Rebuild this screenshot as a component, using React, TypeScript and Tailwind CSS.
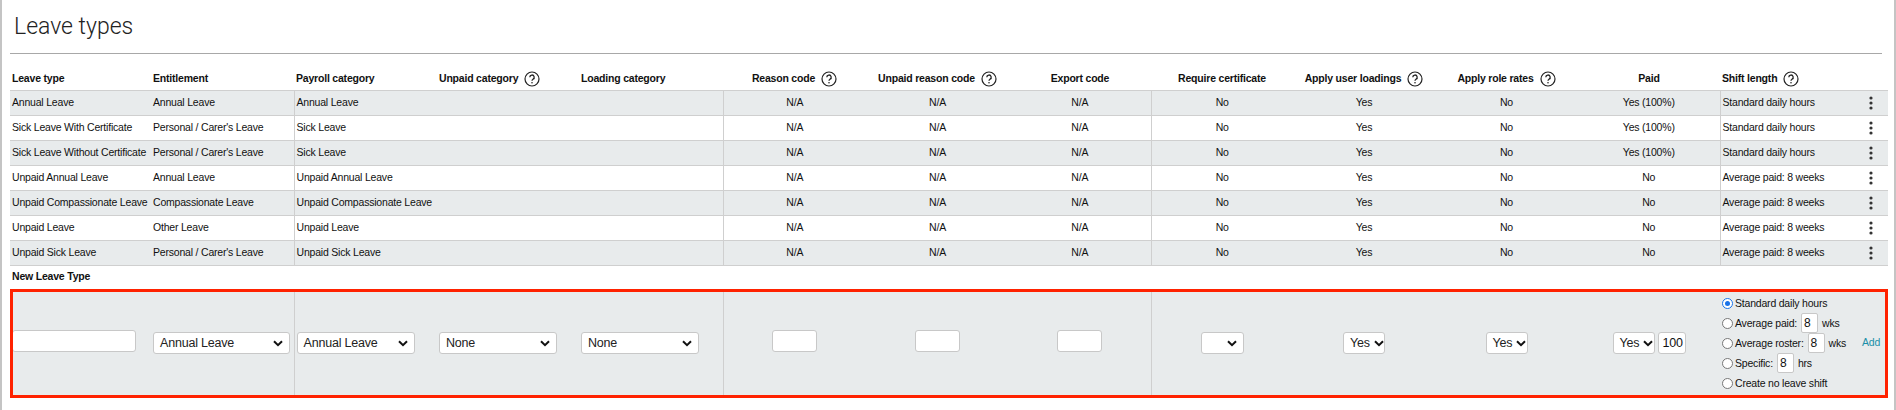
import React from 'react';

const rows = [
  ['Annual Leave', 'Annual Leave', 'Annual Leave', 'Yes (100%)', 'Standard daily hours'],
  ['Sick Leave With Certificate', "Personal / Carer's Leave", 'Sick Leave', 'Yes (100%)', 'Standard daily hours'],
  ['Sick Leave Without Certificate', "Personal / Carer's Leave", 'Sick Leave', 'Yes (100%)', 'Standard daily hours'],
  ['Unpaid Annual Leave', 'Annual Leave', 'Unpaid Annual Leave', 'No', 'Average paid: 8 weeks'],
  ['Unpaid Compassionate Leave', 'Compassionate Leave', 'Unpaid Compassionate Leave', 'No', 'Average paid: 8 weeks'],
  ['Unpaid Leave', 'Other Leave', 'Unpaid Leave', 'No', 'Average paid: 8 weeks'],
  ['Unpaid Sick Leave', "Personal / Carer's Leave", 'Unpaid Sick Leave', 'No', 'Average paid: 8 weeks'],
];

function Help() {
  return (
    <svg width="16" height="16" viewBox="0 0 16 16" className="inline-block align-middle ml-1.5">
      <circle cx="8" cy="8" r="7" fill="none" stroke="#222" strokeWidth="1.2" />
      <path d="M5.8 6.2a2.2 2.2 0 1 1 3.2 2c-.7.4-1 .8-1 1.6" fill="none" stroke="#222" strokeWidth="1.3" />
      <circle cx="8" cy="11.8" r="0.8" fill="#222" />
    </svg>
  );
}

function Kebab() {
  return (
    <svg width="4" height="14" viewBox="0 0 4 14" className="inline-block">
      <circle cx="2" cy="2" r="1.6" fill="#333" />
      <circle cx="2" cy="7" r="1.6" fill="#333" />
      <circle cx="2" cy="12" r="1.6" fill="#333" />
    </svg>
  );
}

function Select({ value, w }: { value: string; w: string }) {
  return (
    <div className={`inline-flex items-center justify-between gap-1 h-[22px] bg-white border border-[#c8c8c8] rounded-[3px] px-1.5 text-[12.5px] text-[#222] ${w}`}>
      <span>{value}</span>
      <svg width="10" height="7" viewBox="0 0 10 7" className="shrink-0"><path d="M1 1.2l4 4 4-4" fill="none" stroke="#111" strokeWidth="2" /></svg>
    </div>
  );
}

function Box({ w, v = '' }: { w: string; v?: string }) {
  return (
    <div className={`inline-flex items-center h-[22px] bg-white border border-[#c8c8c8] rounded-[3px] px-1 text-[12.5px] ${w}`}>{v}</div>
  );
}

function Radio({ on }: { on?: boolean }) {
  return (
    <span className={`inline-block shrink-0 w-[11px] h-[11px] rounded-full border mr-0.5 mt-[5px] bg-white ${on ? 'border-[#1a73e8]' : 'border-[#777]'}`}>
      {on && <span className="block w-[5px] h-[5px] m-[2px] rounded-full bg-[#1a73e8]" />}
    </span>
  );
}

function Num() {
  return <span className="mx-1 w-[17px] h-[20px] bg-white border border-[#c8c8c8] rounded-[2px] pl-0.5 text-[12px] leading-[19px]">8</span>;
}

const sep = 'border-l border-[#cfcfcf]';

export default function App() {
  return (
    <div className="w-[1896px] h-[410px] bg-white border-l-2 border-r-2 border-[#c4c4c4] px-2 text-[10.5px] tracking-[-0.2px] text-[#111] whitespace-nowrap" style={{ fontFamily: '"Liberation Sans", Arial, sans-serif' }}>
      <h1 className="pt-[10px] pb-[8px] text-[23px] font-light text-[#222] pl-1 tracking-normal" style={{ fontFamily: 'Roboto, sans-serif' }}>Leave types</h1>
      <div className="border-t border-[#a8a8a8] mr-1" />
      <table className="mt-[14px] border-collapse table-fixed w-[1878px]">
        <colgroup>
          <col className="w-[143px]" /><col className="w-[141px]" /><col className="w-[145px]" /><col className="w-[142px]" />
          <col className="w-[142px]" /><col className="w-[143px]" /><col className="w-[143px]" /><col className="w-[142px]" />
          <col className="w-[142px]" /><col className="w-[142px]" /><col className="w-[143px]" /><col className="w-[142px]" />
          <col className="w-[134px]" /><col className="w-[34px]" />
        </colgroup>
        <thead>
          <tr className="h-[23px] font-bold text-left">
            <th className="pl-0.5">Leave type</th>
            <th>Entitlement</th>
            <th className="pl-0.5">Payroll category</th>
            <th>Unpaid category<Help /></th>
            <th>Loading category</th>
            <th className="text-center">Reason code<Help /></th>
            <th className="text-center">Unpaid reason code<Help /></th>
            <th className="text-center">Export code</th>
            <th className="text-center">Require certificate</th>
            <th className="text-center">Apply user loadings<Help /></th>
            <th className="text-center">Apply role rates<Help /></th>
            <th className="text-center">Paid</th>
            <th className="pl-0.5">Shift length<Help /></th>
            <th />
          </tr>
        </thead>
        <tbody>
          {rows.map((r, i) => (
            <tr key={i} className={`h-[25px] border-t border-[#cfcfcf] ${i % 2 === 0 ? 'bg-[#e8ebec]' : 'bg-white'} ${i === rows.length - 1 ? 'border-b' : ''}`}>
              <td className="pl-0.5">{r[0]}</td>
              <td>{r[1]}</td>
              <td className={`${sep} pl-0.5`}>{r[2]}</td>
              <td />
              <td />
              <td className={`${sep} text-center`}>N/A</td>
              <td className="text-center">N/A</td>
              <td className="text-center">N/A</td>
              <td className={`${sep} text-center`}>No</td>
              <td className="text-center">Yes</td>
              <td className="text-center">No</td>
              <td className="text-center">{r[3]}</td>
              <td className={`${sep} pl-0.5`}>{r[4]}</td>
              <td className="text-center"><Kebab /></td>
            </tr>
          ))}
          <tr className="h-[23px]">
            <td colSpan={14} className="pl-0.5 font-bold">New Leave Type</td>
          </tr>
          <tr className="h-[109px] bg-[#e8ebec] outline-[3px] outline-[#ff2200] -outline-offset-[3px]">
            <td className="pl-0.5"><Box w="w-[124px]" /></td>
            <td><Select value="Annual Leave" w="w-[137px]" /></td>
            <td className={`${sep} pl-0.5`}><Select value="Annual Leave" w="w-[118px]" /></td>
            <td><Select value="None" w="w-[118px]" /></td>
            <td><Select value="None" w="w-[118px]" /></td>
            <td className={`${sep} text-center`}><Box w="w-[45px]" /></td>
            <td className="text-center"><Box w="w-[45px]" /></td>
            <td className="text-center"><Box w="w-[45px]" /></td>
            <td className={`${sep} text-center`}><Select value="" w="w-[43px]" /></td>
            <td className="text-center"><Select value="Yes" w="w-[42px]" /></td>
            <td className="text-center"><Select value="Yes" w="w-[42px]" /></td>
            <td className="text-center">
              <div className="inline-flex gap-[3px]"><Select value="Yes" w="w-[42px]" /><Box w="w-[28px]" v="100" /></div>
            </td>
            <td className="pl-0.5 text-[10.5px] leading-[20px]">
              <div className="flex items-start"><Radio on /><span>Standard daily hours</span></div>
              <div className="flex items-start"><Radio /><span>Average paid:</span><Num /><span>wks</span></div>
              <div className="flex items-start"><Radio /><span>Average roster:</span><Num /><span>wks</span></div>
              <div className="flex items-start"><Radio /><span>Specific:</span><Num /><span>hrs</span></div>
              <div className="flex items-start"><Radio /><span>Create no leave shift</span></div>
            </td>
            <td className="text-center text-[#1a8fa8]">Add</td>
          </tr>
        </tbody>
      </table>
    </div>
  );
}
